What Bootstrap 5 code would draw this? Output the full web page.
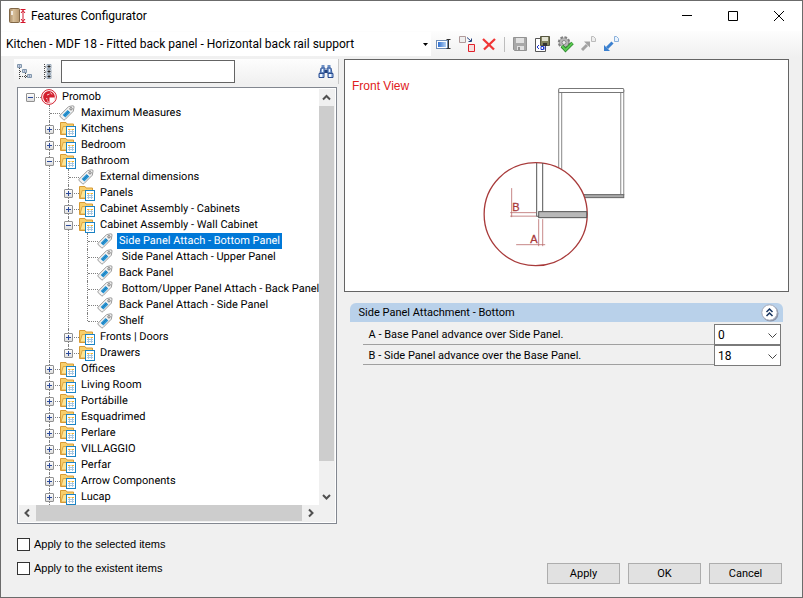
<!DOCTYPE html>
<html lang="en">
<head>
<meta charset="utf-8">
<meta name="viewport" content="width=device-width, initial-scale=1">
<title>Features Configurator</title>
<link href="https://cdn.jsdelivr.net/npm/bootstrap@5.3.0/dist/css/bootstrap.min.css" rel="stylesheet">
<style>
body{font:11px/16px Roboto,"Liberation Sans",sans-serif;color:#000;background:#f0f0f0}
.win{min-height:100vh;border:1px solid #6b6b6b}
.titlebar{height:30px;padding-left:8px}
.titlebar h1{font:12px/16px Roboto,sans-serif;margin:0 0 0 4px}
.winbtn{width:46px;height:30px;border:0;background:none;padding:0}
.toolbar-main{height:26px;background:linear-gradient(#fdfdfd,#f0f0f0)}
.config-pick{width:430px;height:24px;font:12px/16px Roboto,sans-serif}
.config-pick select{appearance:none;border:0;background:#fff;padding:0 24px 0 5px;width:100%;height:100%;color:#000}
.config-pick svg{position:absolute;right:3px;top:11px;pointer-events:none}
.tool{border:0;background:none;padding:0;width:16px;height:16px;flex:none}
.tool svg,.node svg,.tool{display:block}
.tool svg{overflow:visible}
.tool-row{gap:7px}
.vrule{width:1px;height:15px;background:#bdbdbd}
.panes{display:grid;grid-template-columns:325fr 446fr;gap:5px;padding:2px 13px 0}
.search{height:25px;background:linear-gradient(#fdfdfd,#f0f0f0);padding:0 4px 0 3px;border-right:1px solid #c8c8c8}
.search input{height:23px;width:174px;border:1px solid #646464;background:#fff;padding:0 4px}
.tree-box{border:1px solid #828790;background:#fff;padding:1px;margin:3px 2px 0 3px;display:grid;grid-template-columns:minmax(0,1fr) 16px}
.tree,.tree ul{list-style:none;margin:0;padding:0}
.tree{overflow:hidden;padding-left:7px;white-space:nowrap;text-rendering:geometricPrecision}
.tree ul{padding-left:19px}
.tree li{position:relative}
.tree li li::before{content:"";position:absolute;left:4px;top:0;bottom:0;border-left:1px dotted #808080}
.tree ul ul>li:last-child::before{bottom:auto;height:8px}
.node{display:flex;height:16px;align-items:center;position:relative}
.node::before{content:"";position:absolute;left:5px;top:8px;width:10px;border-top:1px dotted #808080}
.twist{width:9px;height:9px;border:0;padding:0;background:none;display:block;position:relative;flex:none}
.node>svg{margin:0 0 1px 6px;flex:none}
.leaf>svg{margin-left:14px}
.node>span{margin-left:3px;padding:0 2px;white-space:pre}
.leaf>span{margin-left:4px}
.picked{background:#0078d7;color:#fff}
.vbar,.hbar{background:#f0f0f0;display:flex}
.vbar{flex-direction:column}
.bar-arrow{border:0;background:none;padding:0;width:16px;height:17px;display:block;flex:none}
.bar-arrow svg{display:block}
.vbar .thumb{margin-right:1px;background:#cdcdcd;flex:355}
.vbar .rest{flex:27}
.hbar .thumb{margin:0 1px 1px;background:#cdcdcd;flex:264}
.ticks{padding:12px 0 0 3px}
.ticks label{display:flex;align-items:center;gap:4px;height:16px;margin-bottom:8px;font-family:"Liberation Sans",sans-serif}
.ticks input{appearance:none;width:13px;height:13px;border:1px solid #333;background:#fff;margin:0}
.ticks input:checked{background:#0078d7}
.view{border:1px solid #646464;background:#fff;margin:0}
.view svg{display:block;width:100%}
.group{margin:11px 6px 0}
.group h2{font:inherit;margin:0;height:19px;background:#b9d1ea;border-radius:6px 6px 0 0;padding:0 4px 0 9px}
.group h2 button{border:0;background:none;padding:0;height:18px}
.fields{padding:2px 2px 0 13px}
.field{height:20px;border-bottom:1px solid #a0a0a0}
.field label{padding:3px 0 0 6px}
.field:first-child{height:21px}
.field select{appearance:none;width:67px;height:21px;border:1px solid #7a7a7a;background:#fff;padding:0 3px;color:#000;font-size:12px;line-height:16px}
.field svg{position:absolute;right:4px;top:9px;pointer-events:none}
.actions{padding:0 7px 0 0;gap:8px}
.actions .btn{--bs-btn-padding-x:0;--bs-btn-padding-y:0;--bs-btn-border-radius:0;--bs-btn-bg:#e1e1e1;--bs-btn-border-color:#adadad;--bs-btn-color:#000;--bs-btn-hover-bg:#e5f1fb;--bs-btn-hover-color:#000;width:73px;height:21px;font:11px/16px Roboto,sans-serif}
</style>
<script src="https://cdn.jsdelivr.net/npm/bootstrap@5.3.0/dist/js/bootstrap.bundle.min.js"></script>
</head>
<body>
<svg width="0" height="0" class="position-absolute" aria-hidden="true">
<defs>
<linearGradient id="gbox" x2="0" y2="1"><stop stop-color="#fff"/><stop offset="1" stop-color="#dcdcdc"/></linearGradient>
<linearGradient id="gblue" x2="1"><stop stop-color="#2f6fd0"/><stop offset="1" stop-color="#b5d3f5"/></linearGradient>
<linearGradient id="gwood"><stop stop-color="#a98b65"/><stop offset=".4" stop-color="#d8c09b"/><stop offset="1" stop-color="#b79870"/></linearGradient>
</defs>
<symbol id="plus" viewBox="0 0 9 9"><rect x=".5" y=".5" width="8" height="8" rx=".5" fill="url(#gbox)" stroke="#919191"/><path d="M2 4.5h5M4.5 2v5" stroke="#2b4a9b"/></symbol>
<symbol id="minus" viewBox="0 0 9 9"><rect x=".5" y=".5" width="8" height="8" rx=".5" fill="url(#gbox)" stroke="#919191"/><path d="M2 4.5h5" stroke="#2b4a9b"/></symbol>
<symbol id="tag" viewBox="0 0 16 16"><path d="M1.2 10 9.6 1.6 13.6.8Q15.2.6 15 2.200L14.300 6.200 6 14.600Q5.200 15.300 4.400 14.600L1.200 11.700Q.4 10.800 1.200 10z" fill="#f2f2f2" stroke="#9a9a9a"/><path d="M3.600 10 8.600 5l2.800 2.600-5 5z" fill="#2b95d3"/><path d="m5 11 5-5" stroke="#1672ad" stroke-width=".7"/><circle cx="12" cy="3.800" r="1.200" fill="#fff" stroke="#777"/></symbol>
<symbol id="folder" viewBox="0 0 16 16"><path d="M.5 13.5v-12H6l1 1.500h6.500v10.500z" fill="#f8cf6c" stroke="#d79b35"/><path d="M1 13 3.200 5.500H15L13 13z" fill="#fee595" stroke="#d79b35" stroke-width=".8"/><rect x="6.500" y="5.500" width="9" height="10" fill="#fff" stroke="#1b83c4"/><path d="M8 8.500h2.500M11.500 8.500H14" stroke="#f5b62c"/><path d="M8 10.500h6M8 12.500h6M9.500 9v5M12.500 9v5" stroke="#a3c4df" stroke-width=".9"/></symbol>
<symbol id="brand" viewBox="0 0 16 16"><circle cx="8" cy="8" r="7.400" fill="#fff" stroke="#d3202f"/><circle cx="8" cy="8" r="5.900" fill="#d3202f"/><path d="M8.500 8.500h5.400A6 6 0 0 1 8.500 14z" fill="#fff"/><path d="m6 6 2.500-1M5 9.500l1.500.5M9.500 3.500l1.500 2M6.500 11.500l1 2" stroke="#fff" stroke-width=".8"/></symbol>
</svg>

<div class="win d-flex flex-column">
<header class="titlebar bg-white d-flex align-items-center">
<svg width="18" height="16" viewBox="0 0 18 16"><rect x=".5" y=".5" width="10" height="14" rx="1" fill="url(#gwood)" stroke="#806747"/><path d="M3 3v4" stroke="#fff" stroke-width="1.5"/><path d="M11.500 1.500h5M11.500 14.500h5M14 2v12M12 5l2-2.500 2 2.500M12 11l2 2.500 2-2.500" stroke="#d3142a" fill="none"/></svg>
<h1>Features Configurator</h1>
<div class="d-flex ms-auto">
<button class="winbtn" aria-label="Minimize"><svg width="10" height="10"><path d="M0 4.500h10" stroke="#000"/></svg></button>
<button class="winbtn" aria-label="Maximize"><svg width="10" height="10"><path d="M.5.5h9v9h-9z" fill="none" stroke="#000"/></svg></button>
<button class="winbtn" aria-label="Close"><svg width="10" height="10"><path d="m0 0 10 10M10 0 0 10" stroke="#000"/></svg></button>
</div>
</header>

<div class="toolbar-main d-flex align-items-center">
<div class="config-pick position-relative flex-shrink-0">
<select aria-label="Configuration"><option>Kitchen - MDF 18 - Fitted back panel - Horizontal back rail support</option></select>
<svg width="5" height="3"><path d="M0 0h5L2.500 3z"/></svg>
</div>
<div class="tool-row d-flex align-items-center ms-1">
<button class="tool" aria-label="Rename"><svg width="16" height="16"><rect x="1.500" y="4.500" width="11" height="8" fill="#fff" stroke="#6f8db5"/><rect x="3" y="6" width="8" height="5" fill="url(#gblue)"/><path d="M11.500 3.500h4M11.500 12.500h4M13.500 3.500v9" stroke="#333"/></svg></button>
<button class="tool" aria-label="Replace"><svg width="17" height="17"><path d="M1.500.500h6v6h-6z" fill="#eee" stroke="#b09a9a"/><path d="M10.500 8.500h6v7h-6z" fill="#f6dede" stroke="#e0202a"/><path d="m9 1.500 4 3.500M13.500 2.500v3h-3" fill="none" stroke="#24427e"/></svg></button>
<button class="tool" aria-label="Delete"><svg width="16" height="16"><path d="M2 3 13 13.500M14 3 3 13.500" stroke="#f03535" stroke-width="2.300"/></svg></button>
<span class="vrule"></span>
<button class="tool" aria-label="Save"><svg width="16" height="16"><path d="M1.500 1.500h13v13h-12l-1-1z" fill="#a8a8a8" stroke="#929292"/><path d="M4 2h8v5H4zM5 10h7v4H5z" fill="#e1e1e1"/><path d="M6 11h2v3H6z" fill="#929292"/></svg></button>
<button class="tool" aria-label="Save as"><svg width="17" height="17"><path d="M.5 2.500h10v13H.5z" fill="#fff" stroke="#555"/><path d="M5.500.500h9v9h-9z" fill="#81815e" stroke="#555540"/><path d="M7 1h6v4H7z" fill="#e2e2d2"/><path d="M8 7h4v3H8z" fill="#333"/><path d="m4 9-2 2 2 2M8.500 10.500H6v3h2.500v-3M10 10.500v3" fill="none" stroke="#1c35d0"/></svg></button>
<button class="tool" aria-label="Validate"><svg width="18" height="17"><circle cx="6" cy="6.500" r="5" fill="#aaa" stroke="#818181" stroke-width="2.500" stroke-dasharray="2.500 1.400"/><circle cx="6" cy="6.500" r="4.200" fill="#b8b8b8"/><circle cx="6" cy="6.500" r="2" fill="#eee" stroke="#888"/><path d="m4 10 3.500 4L14.500 7" fill="none" stroke="#257f27" stroke-width="3.500"/><path d="m4 10 3.500 4L14.500 7" fill="none" stroke="#5ac851" stroke-width="2"/></svg></button>
<button class="tool" aria-label="Import"><svg width="16" height="16"><path d="m1 14 5-5" stroke="#a2a2a2" stroke-width="3"/><path d="M3 5.500h6v6z" fill="#a2a2a2"/><path d="M10.500.500h2l2 2v3h-4z" fill="#eee" stroke="#bbb"/></svg></button>
<button class="tool" aria-label="Export"><svg width="16" height="16"><path d="m3 12 5.500-5.500" stroke="#3b80cf" stroke-width="3"/><path d="M0 9v6h6z" fill="#3b80cf"/><path d="M10.500.500h2l2 2v3h-4z" fill="#eaf4ff" stroke="#8ab0da"/></svg></button>
</div>
</div>

<main class="panes">
<section>
<div class="search d-flex align-items-center">
<button class="tool" aria-label="Collapse all"><svg width="16" height="16"><path d="M2.500 4v12M3 7.500h3M3 12.500h7M8.500 9v5" stroke="#444" stroke-dasharray="1 1"/><path d="M.5.500h4v3h-4zM5.500 5.500h4v3h-4zM10.500 10.500h4v3h-4z" fill="#fff" stroke="#8197ad"/><path d="M1.500 2h2M6.500 7h2M11.500 12h2" stroke="#24427e"/></svg></button>
<button class="tool ms-2" aria-label="Expand all"><svg width="16" height="16"><path d="M3.500 0v16M4 3h3M4 8h3M4 13h3" stroke="#444" stroke-dasharray="1 1"/><path d="M6 .5h4v4H6zM6 5.500h4v4H6zM6 10.500h4v4H6z" fill="#e5edf5" stroke="#9aa9b8"/><path d="M6.500 2.500h3M8 1v3M6.500 7.500h3M8 6v3M6.500 12.500h3M8 11v3" stroke="#222"/></svg></button>
<input type="text" aria-label="Search" class="ms-1">
<button class="tool ms-auto" aria-label="Find"><svg width="16" height="16"><path d="M3.500 1h3v3h-3zM9.500 1h3v3h-3z" fill="#6c8fc4"/><path d="M3 4h4v5H2zM9 4h4l1 5H9z" fill="#7ea2d4" stroke="#3a5c9c"/><path d="M6.500 6h3v3h-3z" fill="#23427e"/><path d="M1 9.500h5v4H1zM10 9.500h5v4h-5z" fill="#9dbbe2" stroke="#2b4d91"/><path d="M2 10h2v3H2zM11 10h2v3h-2zM4 5h1v3H4zM11 5h1v3h-1z" fill="#eef5ff"/></svg></button>
</div>

<div class="tree-box">
<ul class="tree">
<li><div class="node"><button class="twist" aria-label="Collapse"><svg width="9" height="9"><use href="#minus"/></svg></button><svg width="16" height="16"><use href="#brand"/></svg><span>Promob</span></div>
<ul>
<li><div class="node leaf"><svg width="16" height="16"><use href="#tag"/></svg><span>Maximum Measures</span></div></li>
<li><div class="node"><button class="twist" aria-label="Expand"><svg width="9" height="9"><use href="#plus"/></svg></button><svg width="16" height="16"><use href="#folder"/></svg><span>Kitchens</span></div></li>
<li><div class="node"><button class="twist" aria-label="Expand"><svg width="9" height="9"><use href="#plus"/></svg></button><svg width="16" height="16"><use href="#folder"/></svg><span>Bedroom</span></div></li>
<li><div class="node"><button class="twist" aria-label="Collapse"><svg width="9" height="9"><use href="#minus"/></svg></button><svg width="16" height="16"><use href="#folder"/></svg><span>Bathroom</span></div>
<ul>
<li><div class="node leaf"><svg width="16" height="16"><use href="#tag"/></svg><span>External dimensions</span></div></li>
<li><div class="node"><button class="twist" aria-label="Expand"><svg width="9" height="9"><use href="#plus"/></svg></button><svg width="16" height="16"><use href="#folder"/></svg><span>Panels</span></div></li>
<li><div class="node"><button class="twist" aria-label="Expand"><svg width="9" height="9"><use href="#plus"/></svg></button><svg width="16" height="16"><use href="#folder"/></svg><span>Cabinet Assembly - Cabinets</span></div></li>
<li><div class="node"><button class="twist" aria-label="Collapse"><svg width="9" height="9"><use href="#minus"/></svg></button><svg width="16" height="16"><use href="#folder"/></svg><span>Cabinet Assembly - Wall Cabinet</span></div>
<ul>
<li><div class="node leaf"><svg width="16" height="16"><use href="#tag"/></svg><span class="picked">Side Panel Attach - Bottom Panel</span></div></li>
<li><div class="node leaf"><svg width="16" height="16"><use href="#tag"/></svg><span> Side Panel Attach - Upper Panel</span></div></li>
<li><div class="node leaf"><svg width="16" height="16"><use href="#tag"/></svg><span>Back Panel</span></div></li>
<li><div class="node leaf"><svg width="16" height="16"><use href="#tag"/></svg><span> Bottom/Upper Panel Attach - Back Panel</span></div></li>
<li><div class="node leaf"><svg width="16" height="16"><use href="#tag"/></svg><span>Back Panel Attach - Side Panel</span></div></li>
<li><div class="node leaf"><svg width="16" height="16"><use href="#tag"/></svg><span>Shelf</span></div></li>
</ul></li>
<li><div class="node"><button class="twist" aria-label="Expand"><svg width="9" height="9"><use href="#plus"/></svg></button><svg width="16" height="16"><use href="#folder"/></svg><span>Fronts | Doors</span></div></li>
<li><div class="node"><button class="twist" aria-label="Expand"><svg width="9" height="9"><use href="#plus"/></svg></button><svg width="16" height="16"><use href="#folder"/></svg><span>Drawers</span></div></li>
</ul></li>
<li><div class="node"><button class="twist" aria-label="Expand"><svg width="9" height="9"><use href="#plus"/></svg></button><svg width="16" height="16"><use href="#folder"/></svg><span>Offices</span></div></li>
<li><div class="node"><button class="twist" aria-label="Expand"><svg width="9" height="9"><use href="#plus"/></svg></button><svg width="16" height="16"><use href="#folder"/></svg><span>Living Room</span></div></li>
<li><div class="node"><button class="twist" aria-label="Expand"><svg width="9" height="9"><use href="#plus"/></svg></button><svg width="16" height="16"><use href="#folder"/></svg><span>Portábille</span></div></li>
<li><div class="node"><button class="twist" aria-label="Expand"><svg width="9" height="9"><use href="#plus"/></svg></button><svg width="16" height="16"><use href="#folder"/></svg><span>Esquadrimed</span></div></li>
<li><div class="node"><button class="twist" aria-label="Expand"><svg width="9" height="9"><use href="#plus"/></svg></button><svg width="16" height="16"><use href="#folder"/></svg><span>Perlare</span></div></li>
<li><div class="node"><button class="twist" aria-label="Expand"><svg width="9" height="9"><use href="#plus"/></svg></button><svg width="16" height="16"><use href="#folder"/></svg><span>VILLAGGIO</span></div></li>
<li><div class="node"><button class="twist" aria-label="Expand"><svg width="9" height="9"><use href="#plus"/></svg></button><svg width="16" height="16"><use href="#folder"/></svg><span>Perfar</span></div></li>
<li><div class="node"><button class="twist" aria-label="Expand"><svg width="9" height="9"><use href="#plus"/></svg></button><svg width="16" height="16"><use href="#folder"/></svg><span>Arrow Components</span></div></li>
<li><div class="node"><button class="twist" aria-label="Expand"><svg width="9" height="9"><use href="#plus"/></svg></button><svg width="16" height="16"><use href="#folder"/></svg><span>Lucap</span></div></li>
</ul></li>
</ul>
<div class="vbar">
<button class="bar-arrow" aria-label="Scroll up"><svg width="16" height="17"><path d="m4 10.500 3.500-3.500 3.500 3.500" fill="none" stroke="#505050" stroke-width="2"/></svg></button>
<span class="thumb"></span><span class="rest"></span>
<button class="bar-arrow" aria-label="Scroll down"><svg width="16" height="17"><path d="m4 7 3.500 3.500L11 7" fill="none" stroke="#505050" stroke-width="2"/></svg></button>
</div>
<div class="hbar">
<button class="bar-arrow" aria-label="Scroll left"><svg width="16" height="17"><path d="M10 4.500 6.500 8l3.500 3.500" fill="none" stroke="#505050" stroke-width="2"/></svg></button>
<span class="thumb"></span>
<button class="bar-arrow" aria-label="Scroll right"><svg width="16" height="17"><path d="M6 4.500 9.500 8 6 11.500" fill="none" stroke="#505050" stroke-width="2"/></svg></button>
</div>
<div class="hbar"></div>
</div>

<div class="ticks">
<label><input type="checkbox">Apply to the selected items</label>
<label><input type="checkbox">Apply to the existent items</label>
</div>
</section>

<section class="d-flex flex-column">
<figure class="view">
<svg viewBox="345 60 443 231" role="img" aria-label="Front view of side panel attachment">
<text x="352" y="90" font-size="12" font-family="Liberation Sans, sans-serif" fill="#e02020">Front View</text>
<g fill="none" stroke="#888">
<path d="M558.500 90v105M561.500 93v101M620.500 93v101M623.500 90v105"/>
<rect x="558.500" y="88.500" width="65" height="4" rx="1" fill="#fff" stroke="#777"/>
<rect x="570" y="194.500" width="53.500" height="3" fill="#aaa" stroke="#666"/>
</g>
<circle cx="535.500" cy="214" r="51.500" fill="#fff" stroke="#a83a3a" stroke-width="1.300"/>
<g fill="none" stroke="#555"><path d="M536.500 163v53h2M542.500 163v48"/><rect x="538.500" y="211.500" width="48" height="6" fill="#b9b9b9"/></g>
<path d="M511.500 188v29M510 212.500h26M510 216h26M538.500 219v27M542.500 219v27M516 244.500h29" stroke="#b96a6a" stroke-width=".8"/>
<g font-size="11" font-family="Liberation Sans, sans-serif" fill="#a83a3a" stroke="#a83a3a" stroke-width=".3"><text x="512" y="211">B</text><text x="530" y="243">A</text></g>
</svg>
</figure>
<div class="group">
<h2 class="d-flex align-items-center justify-content-between">Side Panel Attachment - Bottom
<button aria-label="Collapse section"><svg class="d-block" width="18" height="18"><circle cx="9.500" cy="9.500" r="8" fill="#8a93a8"/><circle cx="8.500" cy="8.500" r="7.700" fill="#fff" stroke="#a4a9b8"/><path d="m5.500 8 3-3 3 3M5.500 12l3-3 3 3" fill="none" stroke="#16335f" stroke-width="1.500"/></svg></button></h2>
<div class="fields">
<div class="field d-flex justify-content-between"><label for="fa">A - Base Panel advance over Side Panel.</label><div class="position-relative"><select id="fa"><option>0</option></select><svg width="9" height="5"><path d="m.5.500 4 4 4-4" fill="none" stroke="#444"/></svg></div></div>
<div class="field d-flex justify-content-between"><label for="fb">B - Side Panel advance over the Base Panel.</label><div class="position-relative"><select id="fb"><option>18</option></select><svg width="9" height="5"><path d="m.5.500 4 4 4-4" fill="none" stroke="#444"/></svg></div></div>
</div>
</div>
<footer class="actions d-flex justify-content-end mt-auto">
<button class="btn">Apply</button><button class="btn">OK</button><button class="btn">Cancel</button>
</footer>
</section>
</main>
</div>
</body>
</html>
